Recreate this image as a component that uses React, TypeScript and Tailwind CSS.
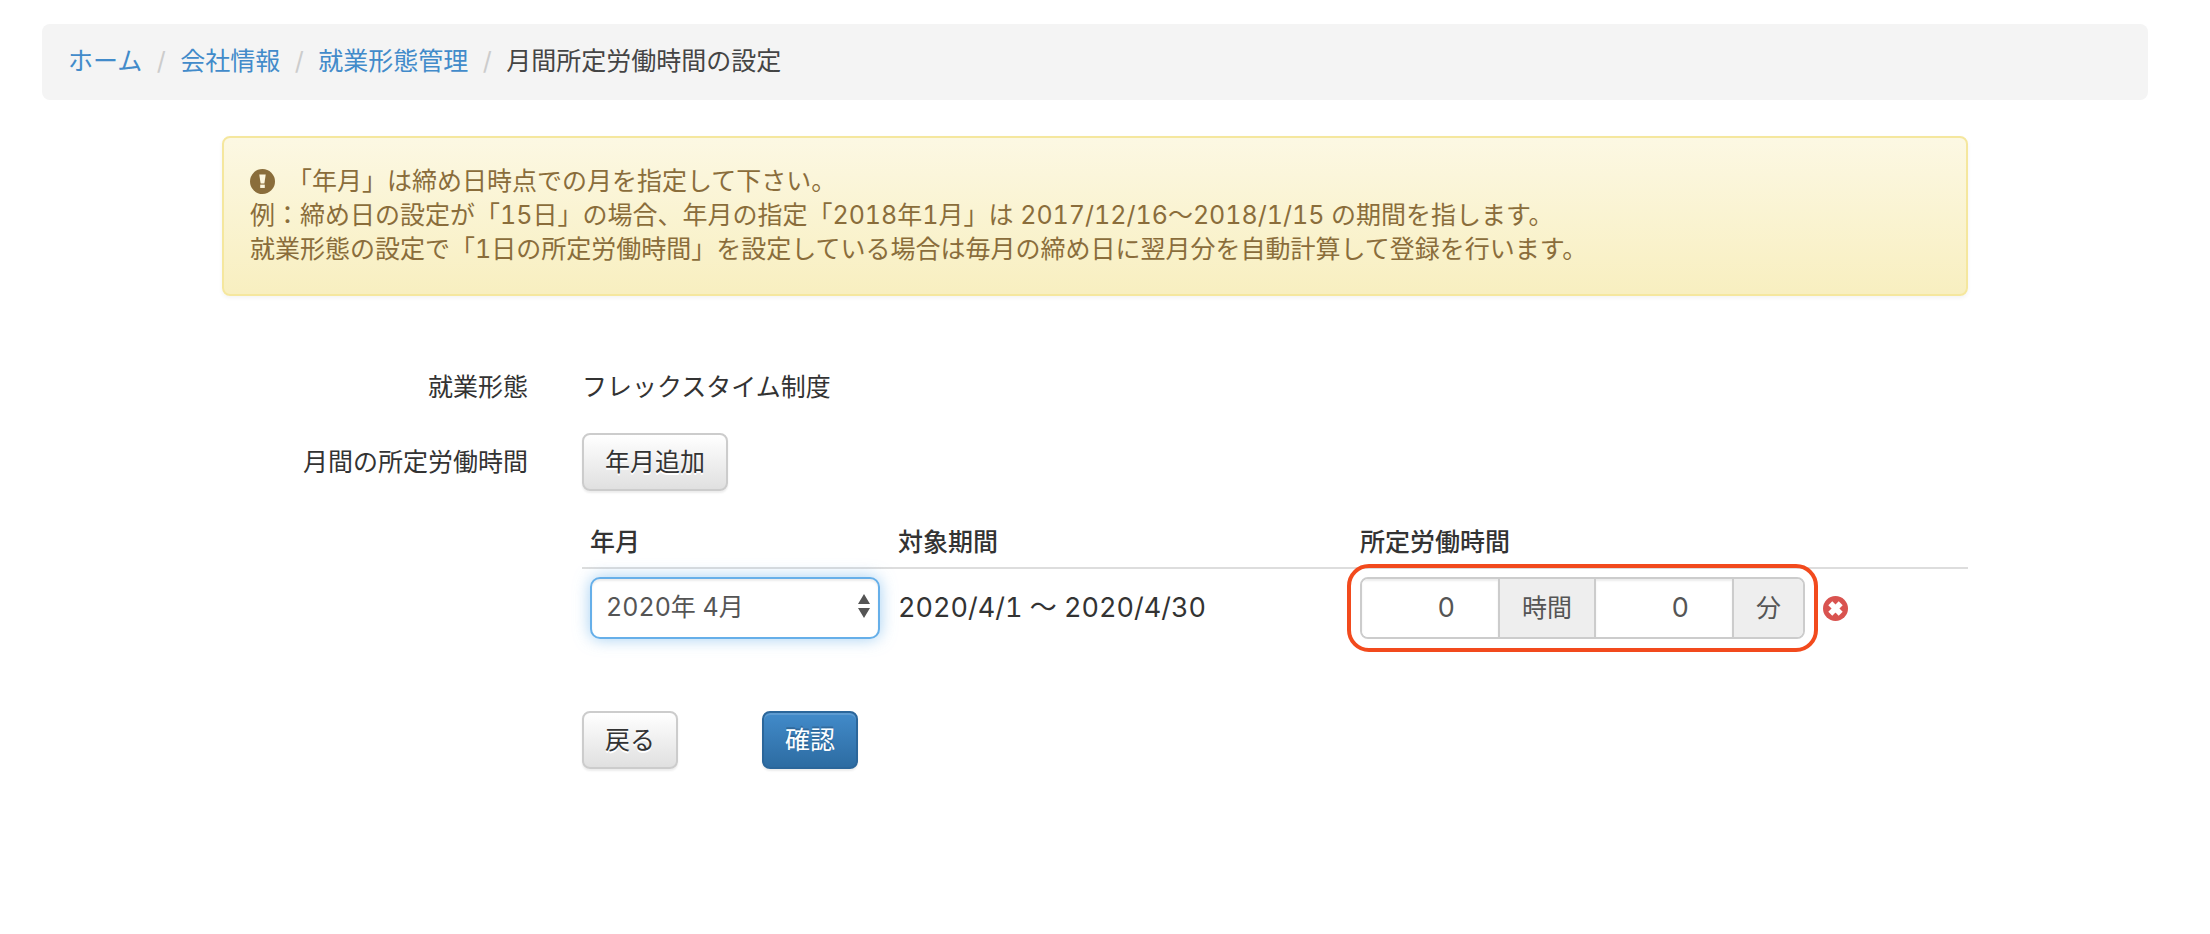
import type { ReactNode } from "react";
import { useState } from "react";

const crumbs = ["ホーム", "会社情報", "就業形態管理"];

const buttonBase =
  "rounded-[8px] border-2 px-[21px] py-[10px] text-[25px] leading-[34px]";

const buttonDefault = `${buttonBase} border-[#ccc] bg-linear-to-b from-white to-[#e0e0e0] text-[#333] shadow-[inset_0_2px_0_rgba(255,255,255,0.15),0_2px_2px_rgba(0,0,0,0.075)] [text-shadow:0_2px_0_#fff]`;

const buttonPrimary = `${buttonBase} border-[#2b669a] bg-linear-to-b from-[#428bca] to-[#2d6ca2] text-white shadow-[inset_0_2px_0_rgba(255,255,255,0.15),0_2px_2px_rgba(0,0,0,0.075)] [text-shadow:0_-2px_0_rgba(0,0,0,0.2)]`;

function Breadcrumb() {
  return (
    <nav className="rounded-[8px] bg-[#f4f4f4] px-[26px] pt-5 pb-[22px]">
      <ol className="flex">
        {crumbs.map((name) => (
          <li key={name} className="flex">
            <a href="#" className="text-[#428bca]">
              {name}
            </a>
            <span className="w-[38px] text-center text-[#ccc]">/</span>
          </li>
        ))}
        <li className="text-[#444]">月間所定労働時間の設定</li>
      </ol>
    </nav>
  );
}

function ExclamationIcon() {
  return (
    <svg viewBox="0 0 24 24" className="mr-3 inline-block size-[25px] align-[-4px]">
      <circle cx="12" cy="12" r="12" fill="#8a6d3b" />
      <path d="M8.9 5.2h6.2l-1.3 8.6h-3.6z" fill="#fcf6de" />
      <rect x="9.8" y="15" width="4.4" height="3.2" fill="#fcf6de" />
    </svg>
  );
}

function RemoveIcon() {
  return (
    <svg viewBox="0 0 24 24" className="block size-[25px]">
      <circle cx="12" cy="12" r="12" fill="#d9534f" />
      <path
        d="M7 7l10 10M17 7l-10 10"
        stroke="#fff"
        strokeWidth="5.4"
      />
    </svg>
  );
}

function Notice() {
  return (
    <div className="rounded-[8px] border-2 border-[#f5e79e] bg-linear-to-b from-[#fcf8e3] to-[#f8efc0] px-[26px] pt-[26px] pb-7 text-[#8a6d3b] shadow-[0_2px_4px_rgba(0,0,0,0.05)]">
      <p>
        <ExclamationIcon />
        「年月」は締め日時点での月を指定して下さい。
      </p>
      <p>例：締め日の設定が「15日」の場合、年月の指定「2018年1月」は 2017/12/16〜2018/1/15 の期間を指します。</p>
      <p>就業形態の設定で「1日の所定労働時間」を設定している場合は毎月の締め日に翌月分を自動計算して登録を行います。</p>
    </div>
  );
}

function Addon({ id, children }: { id: string; children: ReactNode }) {
  return (
    <label htmlFor={id} className="flex items-center bg-[#eee] px-[22px] text-[#555]">
      {children}
    </label>
  );
}

function TimeInput({ id, value, onChange }: { id: string; value: string; onChange: (v: string) => void }) {
  return (
    <input
      id={id}
      type="text"
      inputMode="numeric"
      value={value}
      onChange={(e) => onChange(e.target.value)}
      className="w-[138px] bg-white pr-[43px] text-right text-[27px] text-[#555] shadow-[inset_0_2px_2px_rgba(0,0,0,0.075)] outline-none"
    />
  );
}

function MonthTable() {
  const [hours, setHours] = useState("0");
  const [minutes, setMinutes] = useState("0");

  return (
    <table className="mt-[30px] w-full table-fixed border-collapse text-left">
      <thead>
        <tr className="border-b-2 border-[#ddd]">
          <th id="col-month" className="w-2/9 px-2 pt-1 pb-2 font-medium">年月</th>
          <th className="w-1/3 px-2 pt-1 pb-2 font-medium">対象期間</th>
          <th className="px-2 pt-1 pb-2 font-medium">所定労働時間</th>
        </tr>
      </thead>
      <tbody>
        <tr>
          <td className="p-2 pr-[10px]">
            <div className="relative">
              <select
                aria-labelledby="col-month"
                className="block h-[62px] w-full appearance-none rounded-[10px] border-2 border-[#66afe9] bg-white px-[14px] pb-[2px] text-[#555] shadow-[inset_0_2px_2px_rgba(0,0,0,0.075),0_0_16px_rgba(102,175,233,0.6)] outline-none"
              >
                <option>2020年 4月</option>
              </select>
              <svg
                viewBox="0 0 12 24"
                className="pointer-events-none absolute top-[17px] right-[10px] h-6 w-3"
                fill="#555"
              >
                <path d="M6 0l6 10H0zM6 24l6-10H0z" />
              </svg>
            </div>
          </td>
          <td className="p-2 text-[27px]">2020/4/1 〜 2020/4/30</td>
          <td className="p-2">
            <div className="flex items-center gap-[18px]">
              <div className="relative">
                <div className="flex h-[62px] divide-x-2 divide-[#ccc] overflow-hidden rounded-[8px] border-2 border-[#ccc]">
                  <TimeInput id="hours" value={hours} onChange={setHours} />
                  <Addon id="hours">時間</Addon>
                  <TimeInput id="minutes" value={minutes} onChange={setMinutes} />
                  <Addon id="minutes">分</Addon>
                </div>
                <div className="pointer-events-none absolute -inset-[13px] rounded-[22px] border-4 border-[#f24a1d]" />
              </div>
              <button type="button" aria-label="削除">
                <RemoveIcon />
              </button>
            </div>
          </td>
        </tr>
      </tbody>
    </table>
  );
}

export default function App() {
  return (
    <div className="min-h-screen bg-white pt-6 pr-[62px] pb-10 pl-[42px] font-[Inter,'Noto_Sans_CJK_JP',sans-serif] text-[25px] leading-[34px] text-[#333] tabular-nums">
      <Breadcrumb />
      <main className="mt-9 grid grid-cols-12 gap-x-[54px]">
        <div className="col-span-10 col-start-2">
          <Notice />
        </div>

        <div className="col-span-2 col-start-2 mt-[74px] text-right whitespace-nowrap">就業形態</div>
        <div className="col-span-8 mt-[74px]">フレックスタイム制度</div>

        <div className="col-span-2 col-start-2 mt-[41px] text-right whitespace-nowrap">
          月間の所定労働時間
        </div>
        <div className="col-span-8 mt-[29px]">
          <button type="button" className={buttonDefault}>
            年月追加
          </button>
          <MonthTable />
          <div className="mt-16 flex gap-[84px]">
            <button type="button" className={buttonDefault}>
              戻る
            </button>
            <button type="button" className={buttonPrimary}>
              確認
            </button>
          </div>
        </div>
      </main>
    </div>
  );
}
